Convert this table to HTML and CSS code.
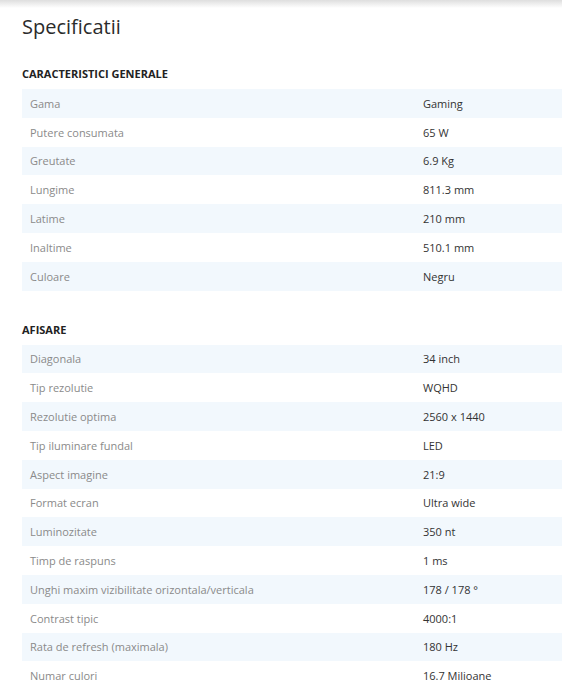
FILE: index.html
```html
<!DOCTYPE html>
<html lang="ro">
<head>
<meta charset="utf-8">
<link rel="stylesheet" href="styles.css">
</head>
<body>
<div class="topbar"></div>
<main class="page">
  <h1 class="title">Specificatii</h1>
  <section class="group">
    <h2 class="group-title">CARACTERISTICI GENERALE</h2>
    <div class="table">
      <div class="row"><span class="label">Gama</span><span class="value">Gaming</span></div>
      <div class="row"><span class="label">Putere consumata</span><span class="value">65 W</span></div>
      <div class="row"><span class="label">Greutate</span><span class="value">6.9 Kg</span></div>
      <div class="row"><span class="label">Lungime</span><span class="value">811.3 mm</span></div>
      <div class="row"><span class="label">Latime</span><span class="value">210 mm</span></div>
      <div class="row"><span class="label">Inaltime</span><span class="value">510.1 mm</span></div>
      <div class="row"><span class="label">Culoare</span><span class="value">Negru</span></div>
    </div>
  </section>
  <section class="group">
    <h2 class="group-title">AFISARE</h2>
    <div class="table">
      <div class="row"><span class="label">Diagonala</span><span class="value">34 inch</span></div>
      <div class="row"><span class="label">Tip rezolutie</span><span class="value">WQHD</span></div>
      <div class="row"><span class="label">Rezolutie optima</span><span class="value">2560 x 1440</span></div>
      <div class="row"><span class="label">Tip iluminare fundal</span><span class="value">LED</span></div>
      <div class="row"><span class="label">Aspect imagine</span><span class="value">21:9</span></div>
      <div class="row"><span class="label">Format ecran</span><span class="value">Ultra wide</span></div>
      <div class="row"><span class="label">Luminozitate</span><span class="value">350 nt</span></div>
      <div class="row"><span class="label">Timp de raspuns</span><span class="value">1 ms</span></div>
      <div class="row"><span class="label">Unghi maxim vizibilitate orizontala/verticala</span><span class="value">178 / 178 °</span></div>
      <div class="row"><span class="label">Contrast tipic</span><span class="value">4000:1</span></div>
      <div class="row"><span class="label">Rata de refresh (maximala)</span><span class="value">180 Hz</span></div>
      <div class="row"><span class="label">Numar culori</span><span class="value">16.7 Milioane</span></div>
    </div>
  </section>
</main>
</body>
</html>
```
FILE: styles.css
```css
* { box-sizing: border-box; }
html, body { margin: 0; padding: 0; background: #fff; }
body {
  font-family: "Open Sans", "Noto Sans", sans-serif;
  color: #333;
  overflow: hidden;
}
.topbar {
  height: 8px;
  background: linear-gradient(to bottom, #dedede, #fff);
}
.page {
  padding: 0 0 0 22px;
}
.title {
  margin: 5px 0 0 0;
  font-size: 20px;
  font-weight: 400;
  line-height: 28px;
  color: #2b2b2b;
}
.group-title {
  margin: 0;
  font-size: 11px;
  font-weight: 700;
  line-height: 16px;
  color: #222;
}
.group:first-of-type .group-title { margin-top: 25px; }
.group + .group .group-title { margin-top: 31px; }
.table {
  margin-top: 7px;
  display: flex;
  flex-direction: column;
}
.row {
  height: 28.8px;
  display: grid;
  grid-template-columns: 393px 1fr;
  align-items: center;
  font-size: 11px;
  padding-left: 8px;
}
.row:nth-child(odd) { background: #f2f8fd; }
.label { color: #8a8a8a; }
.value { color: #333; }
```
